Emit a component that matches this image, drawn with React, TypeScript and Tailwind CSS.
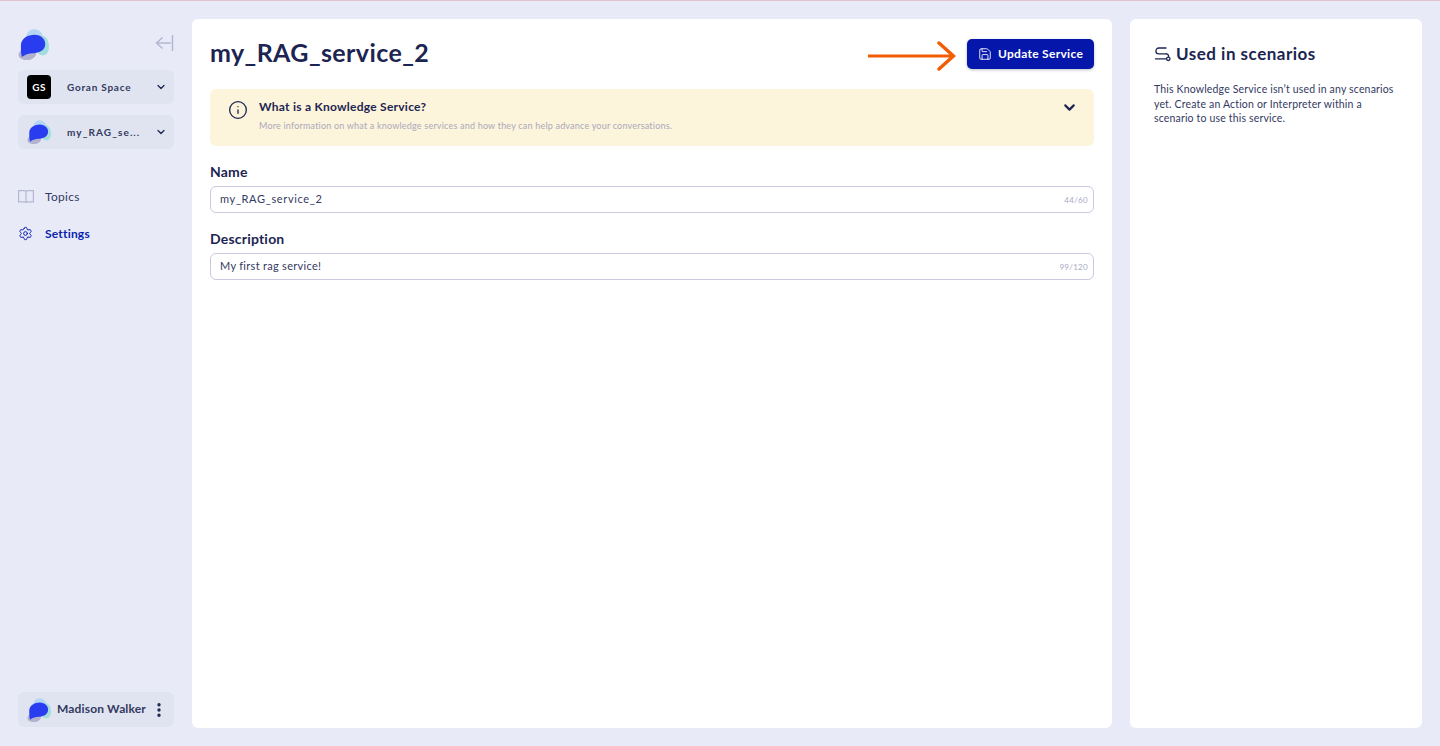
import { ChevronDown, Info, Save, Settings, EllipsisVertical } from "lucide-react";

function Logo({ size }: { size: number }) {
  return (
    <svg width={size} height={size} viewBox="0 0 32 32" fill="none">
      <path d="M9 6C11 0 18 -1 22 2C26 5 28 11 26 17C22 23 11 22 8 16C7 12 7 9 9 6Z" fill="#b5d5f5" />
      <path d="M24 7C28 6 32 11 32 18C32 25 28 28 24 27C20 26 18 22 19 16C19 12 21 8 24 7Z" fill="#a3dcdc" />
      <path d="M1 25C3 20 11 18 16 21C21 24 19 30 12 32C5 33 -1 30 1 25Z" fill="#b3b3cf" />
      <path d="M3 17C3 10 10 6 17 6C24 6 29 11 28 17C27 23 20 25 15 25C12 25 8 26 4 29C3 25 3 21 3 17Z" fill="#2a3cf0" />
    </svg>
  );
}

function ScenarioIcon() {
  return (
    <svg width="18" height="17" viewBox="0 0 18 17" fill="none" stroke="#1c2551" strokeWidth="1.3" strokeLinecap="round">
      <path d="M12 2H4.8a2.9 2.9 0 0 0 0 5.8h7.7" />
      <path d="M12.5 7.8a2.4 2.4 0 0 1 2 2.6" />
      <path d="M1.5 12.8H12" />
      <circle cx="14.3" cy="12.8" r="1.7" />
    </svg>
  );
}

function BookIcon() {
  return (
    <svg width="16" height="13" viewBox="0 0 16 13" fill="none" stroke="#b4b6d2" strokeWidth="1.2">
      <path d="M.6.6H6.5C7.4.6 8 1.2 8 2c0-.8.6-1.4 1.500-1.400h5.900v11.300H9.500C8.600 11.900 8 12.300 8 12.800c0-.5-.6-.9-1.500-.9H.6V.6Z" />
      <path d="M8 2v10.800" />
    </svg>
  );
}

function Field({ label, value, count, valueClass }: { label: string; value: string; count: string; valueClass: string }) {
  return (
    <div className="flex flex-col">
      <label className="text-[14px] leading-[18px] font-bold text-[#1c2551] tracking-[0.2px]">{label}</label>
      <div className="mt-[5px] h-[27px] flex items-center justify-between rounded-[6px] border border-[#c9c9e0] pl-[9px] pr-[5px]">
        <span className={`text-[11px] text-[#33395f] ${valueClass}`}>{value}</span>
        <span className="text-[8px] text-[#a9a9c4] tracking-[0.3px]">{count}</span>
      </div>
    </div>
  );
}

export default function App() {
  return (
    <div
      className="h-[746px] w-[1440px] flex bg-[#e8ebf7] border-t border-[#e0c4cc] overflow-hidden"
      style={{ fontFamily: "Lato, 'Noto Sans', sans-serif" }}
    >
      {/* sidebar */}
      <aside className="w-[192px] shrink-0 flex flex-col pl-[18px] pr-[18px] pt-[27px] pb-[18px]">
        <div className="flex items-center justify-between h-[32px]">
          <Logo size={31} />
          <svg width="19" height="16" viewBox="0 0 19 16" fill="none" stroke="#b4b6d2" strokeWidth="1.5" className="-mt-[2px]">
            <path d="M17.5 0v16M16 8H1.5M7.500 2.500L1.500 8l6 5.500" />
          </svg>
        </div>
        <div className="mt-[10px] h-[34px] rounded-[6px] bg-[#e0e4f0] flex items-center pl-[9px] pr-[7px]">
          <div className="w-[24px] h-[24px] rounded-[4px] bg-black text-white text-[10px] font-bold flex items-center justify-center tracking-[0.4px]">GS</div>
          <span className="ml-[16px] text-[10px] font-bold text-[#33395f] tracking-[0.75px]">Goran Space</span>
          <ChevronDown className="ml-auto text-[#1c2551]" size={12} strokeWidth={2.5} />
        </div>
        <div className="mt-[11px] h-[34px] rounded-[6px] bg-[#e0e4f0] flex items-center pl-[9px] pr-[7px]">
          <Logo size={24} />
          <span className="ml-[16px] text-[10px] font-bold text-[#33395f] tracking-[1.1px]">my_RAG_se...</span>
          <ChevronDown className="ml-auto text-[#1c2551]" size={12} strokeWidth={2.5} />
        </div>
        <nav className="mt-[40px] flex flex-col gap-[22px]">
          <div className="flex items-center h-[15px]">
            <BookIcon />
            <span className="ml-[11px] text-[12px] text-[#33395f] tracking-[0.3px]">Topics</span>
          </div>
          <div className="flex items-center h-[15px]">
            <Settings size={15} className="text-[#0a1fb0]" strokeWidth={1.6} />
            <span className="ml-[12px] text-[12px] font-bold text-[#0a1fb0] tracking-[0.2px]">Settings</span>
          </div>
        </nav>
        <div className="mt-auto h-[35px] rounded-[6px] bg-[#e0e4f0] flex items-center pl-[9px] pr-[6px] mb-[1px]">
          <Logo size={24} />
          <span className="ml-[6px] -mt-[2px] text-[12px] font-bold text-[#33395f] tracking-[0.15px]">Madison Walker</span>
          <EllipsisVertical className="ml-auto text-[#1c2551]" size={18} strokeWidth={2.5} />
        </div>
      </aside>

      {/* main */}
      <main className="mt-[18px] mb-[18px] w-[920px] rounded-[6px] bg-white px-[18px] pt-[20px] flex flex-col">
        <div className="flex items-center h-[30px]">
          <h1 className="text-[25px] font-bold text-[#1c2551] tracking-[0.4px] -mt-[3px]">my_RAG_service_2</h1>
          <svg className="ml-auto mt-[4px]" width="89" height="30" viewBox="0 0 89 30" fill="none" stroke="#f25c05" strokeWidth="3" strokeLinecap="round">
            <path d="M1 15H86" strokeLinecap="butt" />
            <path d="M72 2L86.500 15L72 28" strokeWidth="3.500" />
          </svg>
          <button className="ml-[11px] h-[30px] w-[127px] rounded-[5px] bg-[#0516ab] text-white flex items-center justify-center gap-[6px] text-[12px] font-bold tracking-[0.3px] shadow-[0_1px_3px_rgba(28,37,81,0.3)]">
            <Save size={14} strokeWidth={1.5} />
            Update Service
          </button>
        </div>
        <div className="mt-[20px] h-[57px] rounded-[6px] bg-[#fdf4dc] flex items-start pl-[18px] pr-[16px] pt-[10px]">
          <Info size={20} className="text-[#1c2551] mt-[1px]" strokeWidth={1.6} />
          <div className="ml-[11px] flex flex-col">
            <span className="text-[12px] leading-[16px] font-bold text-[#1c2551] tracking-[0.25px]">What is a Knowledge Service?</span>
            <span className="mt-[5px] text-[9px] leading-[12px] text-[#a9a9bb] tracking-[0.2px]">More information on what a knowledge services and how they can help advance your conversations.</span>
          </div>
          <ChevronDown className="ml-auto text-[#1c2551]" size={17} strokeWidth={3} />
        </div>
        <div className="mt-[17px] flex flex-col gap-[17px]">
          <Field label="Name" value="my_RAG_service_2" count="44/60" valueClass="tracking-[0.65px]" />
          <Field label="Description" value="My first rag service!" count="99/120" valueClass="tracking-[0.3px]" />
        </div>
      </main>

      {/* right panel */}
      <section className="ml-[18px] mt-[18px] mb-[18px] w-[292px] rounded-[6px] bg-white pl-[24px] pr-[24px] pt-[24px]">
        <div className="flex items-center gap-[4px]">
          <ScenarioIcon />
          <h2 className="text-[17px] leading-[22px] font-bold text-[#1c2551] tracking-[0.5px]">Used in scenarios</h2>
        </div>
        <p className="mt-[17px] text-[10.5px] leading-[14.5px] text-[#33395f] tracking-[0.17px]">
          This Knowledge Service isn’t used in any scenarios yet. Create an Action or Interpreter within a scenario to use this service.
        </p>
      </section>
    </div>
  );
}
